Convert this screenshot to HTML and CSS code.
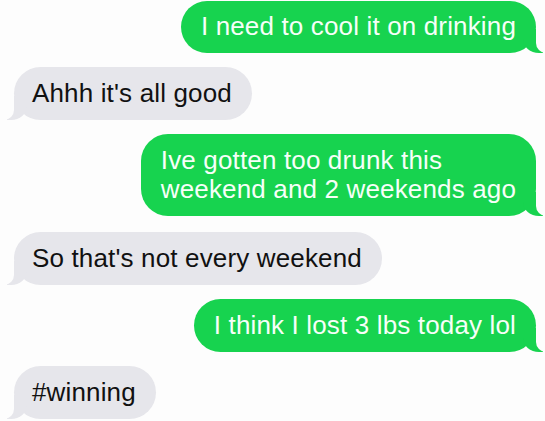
FILE: index.html
```
<!DOCTYPE html>
<html lang="en">
<head>
    <meta charset="UTF-8">
    <meta name="viewport" content="width=device-width, initial-scale=1.0">
    <title>Messages</title>
    <link rel="stylesheet" href="styles.css">
</head>
<body>

    <!-- Conversation -->
    <div class="thread">
        <div class="bubble sent first">I need to cool it on drinking</div>
        <div class="bubble received">Ahhh it's all good</div>
        <div class="bubble sent">Ive gotten too drunk this<br>weekend and 2 weekends ago</div>
        <div class="bubble received spaced">So that's not every weekend</div>
        <div class="bubble sent">I think I lost 3 lbs today lol</div>
        <div class="bubble received">#winning</div>
        <div class="next-peek"></div>
    </div>

</body>
</html>
```

FILE: styles.css
```
body {
    font-family: "Liberation Sans", Arial, sans-serif;
    margin: 0;
    padding: 0;
    background-color: #fdfdfd;
    overflow: hidden;
}

.thread {
    display: flex;
    flex-direction: column;
    gap: 14px;
}

.bubble {
    position: relative;
    max-width: 420px;
    padding: 12px 20px;
    font-size: 26px;
    letter-spacing: 0.15px;
    line-height: 29px;
    border-radius: 27px;
}

.first {
    margin-top: 1px;
    padding-top: 11px;
}

.spaced {
    margin-top: 2px;
}

.sent {
    align-self: flex-end;
    margin-right: 9px;
    background-color: #17d34f;
    color: #f6fff8;
}

.received {
    align-self: flex-start;
    margin-left: 14px;
    padding-left: 18px;
    background-color: #e6e6eb;
    color: #111;
}

/* tails */
.bubble::before,
.bubble::after {
    content: "";
    position: absolute;
    bottom: 0;
    height: 24px;
}

.sent::before {
    right: -7px;
    width: 20px;
    background-color: #17d34f;
    border-bottom-left-radius: 16px 14px;
}

.sent::after {
    right: -26px;
    width: 26px;
    background-color: #fdfdfd;
    border-bottom-left-radius: 10px;
}

.received::before {
    left: -7px;
    width: 20px;
    background-color: #e6e6eb;
    border-bottom-right-radius: 16px 14px;
}

.received::after {
    left: -26px;
    width: 26px;
    background-color: #fdfdfd;
    border-bottom-right-radius: 10px;
}

.next-peek {
    margin-left: 133px;
    margin-top: -12px;
    height: 10px;
    background-color: #f0fbf3;
}
```
